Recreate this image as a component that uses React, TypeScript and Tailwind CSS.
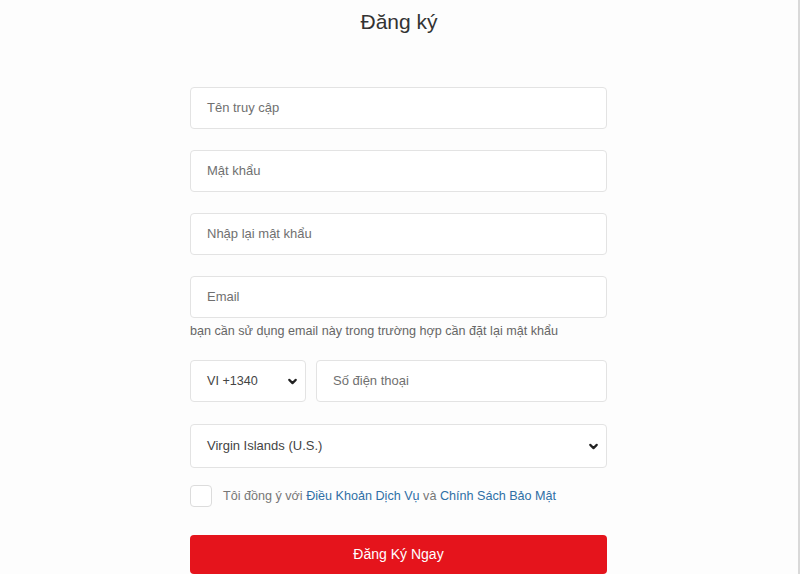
import { ChevronDown } from "lucide-react";

const Field = ({ placeholder }: { placeholder: string }) => (
  <div className="h-[42px] w-full rounded border border-[#e3e3e3] bg-white flex items-center pl-4 text-[13px] text-[#707070]">
    {placeholder}
  </div>
);

const App = () => {
  return (
    <div
      className="h-[574px] w-[800px] bg-[#fdfdfd] border-r-2 border-[#d9d9d9] overflow-hidden"
      style={{ fontFamily: '"Liberation Sans", Arial, sans-serif' }}
    >
      <h1 className="pt-[9px] text-center text-[21px] leading-[26px] text-[#333]">Đăng ký</h1>

      <div className="mt-[52px] w-[417px] ml-[190px]">
        {/* Text inputs */}
        <div className="flex flex-col gap-[21px]">
          <Field placeholder="Tên truy cập" />
          <Field placeholder="Mật khẩu" />
          <Field placeholder="Nhập lại mật khẩu" />
          <Field placeholder="Email" />
        </div>
        <p className="mt-[5px] text-[12.6px] leading-[16px] text-[#666]">
          bạn cần sử dụng email này trong trường hợp cần đặt lại mật khẩu
        </p>

        {/* Phone row */}
        <div className="mt-[21px] flex gap-[10px]">
          <div className="h-[42px] w-[116px] shrink-0 rounded border border-[#e3e3e3] bg-white flex items-center justify-between pl-4 pr-[6px] text-[12.6px] text-[#444]">
            VI +1340
            <ChevronDown size={13} strokeWidth={4} className="text-[#222]" />
          </div>
          <Field placeholder="Số điện thoại" />
        </div>

        {/* Country */}
        <div className="mt-[22px] h-[44px] rounded border border-[#e3e3e3] bg-white flex items-center justify-between pl-4 pr-[6px] text-[13px] text-[#444]">
          Virgin Islands (U.S.)
          <ChevronDown size={13} strokeWidth={4} className="text-[#222]" />
        </div>

        {/* Terms */}
        <div className="mt-[17px] flex items-center gap-[11px]">
          <div className="h-[22px] w-[22px] rounded border border-[#dcdcdc] bg-white" />
          <span className="text-[12.6px] text-[#777]">
            Tôi đồng ý với <span className="text-[#2f6fa6]">Điều Khoản Dịch Vụ</span> và{" "}
            <span className="text-[#2f6fa6]">Chính Sách Bảo Mật</span>
          </span>
        </div>

        <button className="mt-[28px] h-[39px] w-full rounded bg-[#e5141c] text-[14px] text-white">
          Đăng Ký Ngay
        </button>
      </div>
    </div>
  );
};

export default App;
